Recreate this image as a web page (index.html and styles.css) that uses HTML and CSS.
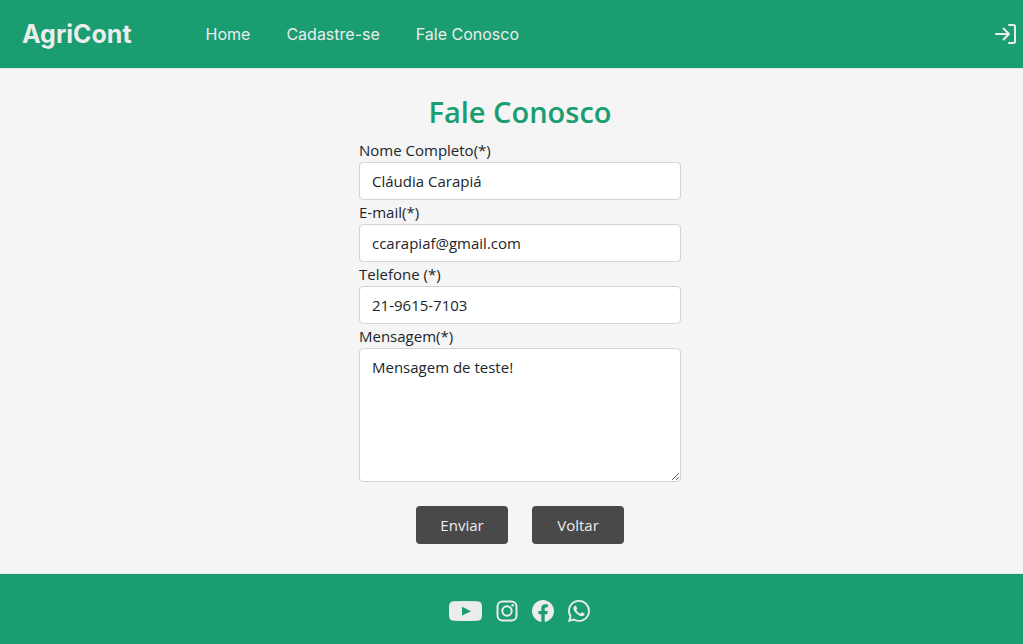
FILE: index.html
```html
<!DOCTYPE html>
<html lang="pt-BR">
<head>
<meta charset="utf-8">
<meta name="viewport" content="width=device-width, initial-scale=1">
<title>AgriCont - Fale Conosco</title>
<link rel="stylesheet" href="styles.css">
</head>
<body class="page">
<header class="navbar">
  <a class="brand" href="#">AgriCont</a>
  <nav class="menu">
    <a class="menu-link" href="#">Home</a>
    <a class="menu-link" href="#">Cadastre-se</a>
    <a class="menu-link" href="#">Fale Conosco</a>
  </nav>
  <a class="login" href="#" aria-label="Entrar">
    <svg class="login-icon" viewBox="0 0 22 22" fill="none" stroke="currentColor" stroke-width="2" stroke-linecap="round" stroke-linejoin="round"><path d="M2 11H15M9.500 5.500l5.500 5.500-5.500 5.500M15 2h4.500a1.500 1.500 0 0 1 1.500 1.500v15a1.500 1.500 0 0 1-1.500 1.500H15"/></svg>
  </a>
</header>
<main class="content">
  <h1 class="title">Fale Conosco</h1>
  <form class="form">
    <label class="label" for="nome">Nome Completo(*)</label>
    <input class="field" id="nome" type="text" value="Cláudia Carapiá">
    <label class="label" for="email">E-mail(*)</label>
    <input class="field" id="email" type="email" value="ccarapiaf@gmail.com">
    <label class="label" for="telefone">Telefone (*)</label>
    <input class="field" id="telefone" type="tel" value="21-9615-7103">
    <label class="label" for="mensagem">Mensagem(*)</label>
    <textarea class="field" id="mensagem" rows="5">Mensagem de teste!</textarea>
    <div class="actions">
      <button class="button" type="submit">Enviar</button>
      <button class="button" type="button">Voltar</button>
    </div>
  </form>
</main>
<footer class="footer">
  <a class="social" href="#" aria-label="YouTube"><svg class="youtube-icon" viewBox="0 0 33 20"><path fill="currentColor" fill-rule="evenodd" d="M5 .2Q16.500-.2 28 .2 32.600.3 32.900 4.500q.3 5.500 0 11-.3 4.200-4.900 4.300-11.500.4-23 0Q.4 19.700.1 15.500q-.3-5.500 0-11Q.4.300 5 .2zM13 5.800v8.800l9-4.400z"/></svg></a>
  <a class="social" href="#" aria-label="Instagram"><svg class="social-icon" viewBox="0 0 22 22" fill="none" stroke="currentColor" stroke-width="2"><rect x="1.500" y="1.500" width="19" height="19" rx="5"/><circle cx="11" cy="11" r="4.700"/><circle cx="16.700" cy="5.300" r="1.300" fill="currentColor" stroke="none"/></svg></a>
  <a class="social" href="#" aria-label="Facebook"><svg class="social-icon" viewBox="0 0 16 16" fill="currentColor"><path d="M16 8.049c0-4.446-3.582-8.050-8-8.050C3.580 0-.002 3.603-.002 8.050c0 4.017 2.926 7.347 6.750 7.951v-5.625h-2.030V8.050H6.750V6.275c0-2.017 1.195-3.131 3.022-3.131.876 0 1.791.157 1.791.157v1.980h-1.009c-.993 0-1.303.621-1.303 1.258v1.510h2.218l-.354 2.326H9.250V16c3.824-.604 6.750-3.934 6.750-7.951z"/></svg></a>
  <a class="social" href="#" aria-label="WhatsApp"><svg class="social-icon" viewBox="0 0 16 16" fill="currentColor"><path d="M13.601 2.326A7.854 7.854 0 0 0 7.994 0C3.627 0 .068 3.558.064 7.926c0 1.399.366 2.760 1.057 3.965L0 16l4.204-1.102a7.933 7.933 0 0 0 3.790.965h.004c4.368 0 7.926-3.558 7.930-7.930A7.898 7.898 0 0 0 13.600 2.326zM7.994 14.521a6.573 6.573 0 0 1-3.356-.920l-.240-.144-2.494.654.666-2.433-.156-.251a6.560 6.560 0 0 1-1.007-3.505c0-3.626 2.957-6.584 6.591-6.584a6.560 6.560 0 0 1 4.660 1.931 6.557 6.557 0 0 1 1.928 4.660c-.004 3.639-2.961 6.592-6.592 6.592zm3.615-4.934c-.197-.099-1.170-.578-1.353-.646-.182-.065-.315-.099-.445.099-.133.197-.513.646-.627.775-.114.133-.232.148-.430.050-.197-.100-.836-.308-1.592-.985-.590-.525-.985-1.175-1.103-1.372-.114-.198-.011-.304.088-.403.087-.088.197-.232.296-.346.100-.114.133-.198.198-.330.065-.134.034-.248-.015-.347-.050-.099-.445-1.076-.612-1.470-.160-.389-.323-.335-.445-.340-.114-.007-.247-.007-.380-.007a.729.729 0 0 0-.529.247c-.182.198-.691.677-.691 1.654 0 .977.710 1.916.810 2.049.098.133 1.394 2.132 3.383 2.992.470.205.840.326 1.129.418.475.152.904.129 1.246.080.380-.058 1.171-.480 1.338-.943.164-.464.164-.860.114-.943-.049-.084-.182-.133-.380-.232z"/></svg></a>
</footer>
</body>
</html>
```
FILE: styles.css
```css
* {
  box-sizing: border-box;
}

.page {
  margin: 0;
  min-height: 100vh;
  display: flex;
  flex-direction: column;
  background: #f5f5f5;
  color: #212529;
  font-family: "Segoe UI", "Open Sans", sans-serif;
  font-size: 15px;
  line-height: 24px;
}

.navbar {
  display: flex;
  align-items: center;
  min-height: 68px;
  padding: 0 7px 0 22px;
  background: #1a9d70;
  color: #ececec;
  font-family: Inter, sans-serif;
}

.brand {
  color: inherit;
  font-size: 25px;
  font-weight: 700;
  line-height: 32px;
  text-decoration: none;
}

.menu {
  display: flex;
  gap: 36px;
  margin-left: 74px;
}

.menu-link {
  color: inherit;
  font-size: 16px;
  text-decoration: none;
}

.login {
  display: flex;
  margin-left: auto;
  color: inherit;
}

.login-icon {
  width: 22px;
  height: 22px;
}

.content {
  flex: 1;
  display: flex;
  flex-direction: column;
  align-items: center;
  padding: 24px 0 24px 17px;
  border-top: 1px solid #e4e8e6;
  border-bottom: 1px solid #e4e8e6;
}

.title {
  margin: 0 0 7px;
  color: #1a9d70;
  font-size: 29px;
  font-weight: 600;
  line-height: 38px;
}

.form {
  display: flex;
  flex-direction: column;
  width: 322px;
  max-width: 100%;
}

.field {
  width: 100%;
  margin: 0;
  padding: 6px 12px;
  border: 1px solid #ced4da;
  border-radius: 4px;
  background: #fff;
  color: inherit;
  font: inherit;
}

.actions {
  display: flex;
  justify-content: center;
  gap: 24px;
  margin-top: 24px;
}

.button {
  min-width: 92px;
  padding: 7px 12px;
  border: 0;
  border-radius: 4px;
  background: #494949;
  color: #ececec;
  font: inherit;
}

.footer {
  display: flex;
  align-items: center;
  justify-content: center;
  gap: 14px;
  min-height: 70px;
  padding: 4px 0 0 16px;
  background: #1a9d70;
  color: #ececec;
}

.social {
  display: flex;
  color: inherit;
}

.youtube-icon {
  width: 33px;
  height: 20px;
}

.social-icon {
  width: 22px;
  height: 22px;
}
```
